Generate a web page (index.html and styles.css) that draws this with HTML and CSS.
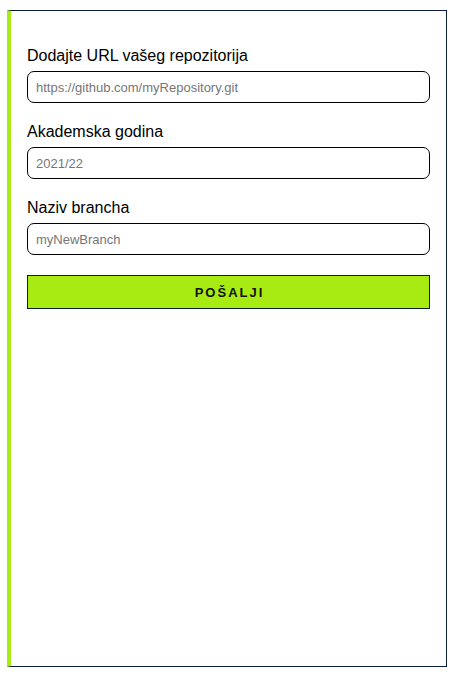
FILE: index.html
```html
<!DOCTYPE html>
<html lang="hr">
<head>
<meta charset="utf-8">
<title>Forma</title>
<link rel="stylesheet" href="styles.css">
</head>
<body>
<div class="panel">
  <form class="form">
    <div class="field">
      <label class="label" for="url">Dodajte URL vašeg repozitorija</label>
      <input class="input" id="url" type="text" placeholder="https://github.com/myRepository.git">
    </div>
    <div class="field">
      <label class="label" for="year">Akademska godina</label>
      <input class="input" id="year" type="text" placeholder="2021/22">
    </div>
    <div class="field">
      <label class="label" for="branch">Naziv brancha</label>
      <input class="input" id="branch" type="text" placeholder="myNewBranch">
    </div>
    <button class="submit" type="button">POŠALJI</button>
  </form>
</div>
</body>
</html>
```
FILE: styles.css
```css
html, body {
  margin: 0;
  padding: 0;
  background: #ffffff;
}
body {
  font-family: "Liberation Sans", Arial, sans-serif;
  padding: 10px 7px;
}
.panel {
  box-sizing: border-box;
  width: 440px;
  height: 657px;
  border: 1px solid #0b1f3f;
  border-left: 4px solid #a8eb12;
  padding: 36px 16px 0 16px;
}
.form {
  display: flex;
  flex-direction: column;
}
.field {
  display: flex;
  flex-direction: column;
  gap: 6px;
  margin-bottom: 20px;
}
.label {
  font-size: 16px;
  line-height: 18px;
  color: #000000;
}
.input {
  box-sizing: border-box;
  height: 32px;
  width: 100%;
  border: 1px solid #000000;
  border-radius: 7px;
  padding: 0 8px;
  font-family: "Liberation Sans", Arial, sans-serif;
  font-size: 13px;
  color: #000;
  background: #fff;
  outline: none;
}
.input::placeholder {
  color: #767676;
}
.submit {
  box-sizing: border-box;
  height: 34px;
  width: 100%;
  background: #a8eb12;
  border: 1px solid #0b1f3f;
  border-radius: 0;
  font-family: "Liberation Sans", Arial, sans-serif;
  font-size: 13px;
  font-weight: bold;
  letter-spacing: 2px;
  color: #111111;
  padding: 0 0 0 2px;
  cursor: pointer;
}
```
